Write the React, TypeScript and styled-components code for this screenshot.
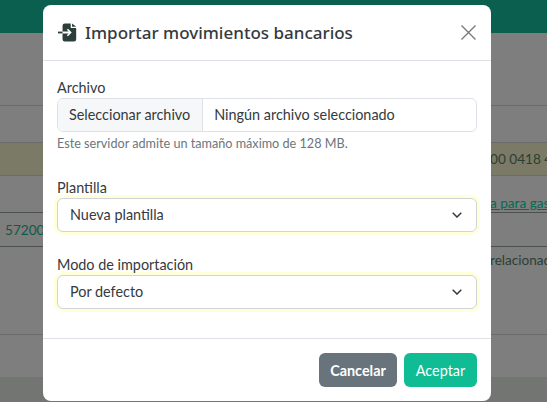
import React from "react";
import styled, { createGlobalStyle } from "styled-components";

const Global = createGlobalStyle`
  html, body { margin: 0; padding: 0; height: 100%; overflow: hidden; }
  body { font-family: "Lato", "Noto Sans", sans-serif; color: #212529; background: #808080; }
`;

const Page = styled.div`
  position: relative;
  width: 547px;
  height: 402px;
  overflow: hidden;
  background: #7e7e7e;
  display: flex;
  flex-direction: column;
`;

const TopBar = styled.div`
  height: 33px;
  flex: none;
  background: #0a5f4f;
`;

const Table = styled.div`
  flex: none;
  margin-top: 72px;
  display: flex;
  flex-direction: column;
`;

const Row = styled.div<{ $h: number; $tint?: boolean; $dark?: boolean; $align?: string }>`
  height: ${(p) => p.$h}px;
  box-sizing: border-box;
  border-top: 1px solid ${(p) => (p.$dark ? "#4b5150" : "#6b6b6b")};
  background: ${(p) => (p.$tint ? "#7a7a66" : "transparent")};
  display: flex;
  align-items: ${(p) => p.$align ?? "center"};
  font-size: 13.6px;
  line-height: 20px;
  color: #0e5a48;
  white-space: nowrap;
`;

const LeftCell = styled.span`
  padding-left: 5px;
`;

const RightCell = styled.span<{ $link?: boolean; $top?: number; $bottom?: number }>`
  margin-left: auto;
  width: 57px;
  flex: none;
  overflow: hidden;
  margin-top: ${(p) => p.$top ?? 0}px;
  margin-bottom: ${(p) => p.$bottom ?? 0}px;
  text-decoration: ${(p) => (p.$link ? "underline" : "none")};
  color: ${(p) => (p.$link ? "#066a50" : "#2a3f34")};
`;

const PageFoot = styled.div`
  flex: 1;
  background: #737573;
`;

const Dialog = styled.div`
  position: absolute;
  top: 5px;
  left: 43px;
  width: 448px;
  height: 396px;
  background: #fff;
  border-radius: 8px;
  display: flex;
  flex-direction: column;
`;

const Header = styled.div`
  height: 56px;
  flex: none;
  box-sizing: border-box;
  border-bottom: 1px solid #dee2e6;
  padding: 0 15px 0 15px;
  display: flex;
  align-items: center;
`;

const Title = styled.h5`
  margin: 0 0 0 7px;
  font-family: "Noto Sans", sans-serif;
  font-size: 17px;
  font-weight: 500;
  color: #343a40;
  flex: 1;
`;

const Body = styled.div`
  flex: 1;
  padding: 16px 14px 0;
  display: flex;
  flex-direction: column;
`;

const Label = styled.label`
  font-size: 14.4px;
  line-height: 19px;
  padding-top: 1px;
  color: #343a40;
  display: block;
  margin-bottom: 1px;
`;

const FileInput = styled.div`
  height: 33.5px;
  box-sizing: border-box;
  border: 1px solid #dee2e6;
  border-radius: 6px;
  display: flex;
  align-items: center;
  font-size: 14.4px;
  color: #343a40;
  overflow: hidden;
`;

const FileButton = styled.span`
  height: 100%;
  display: flex;
  align-items: center;
  padding: 0 12px 0 11px;
  background: #f6f7f9;
  border-right: 1px solid #dee2e6;
`;

const FileName = styled.span`
  padding-left: 11px;
`;

const Help = styled.div`
  margin-top: 3px;
  font-size: 12.65px;
  line-height: 18px;
  color: #6c757d;
`;

const Field = styled.div<{ $mt: number }>`
  margin-top: ${(p) => p.$mt}px;
`;

const Select = styled.div`
  height: 34px;
  box-sizing: border-box;
  border: 1px solid #ced4da;
  border-radius: 6px;
  box-shadow: 0 0 0 3px #ffffd9;
  padding: 0 14px 0 12px;
  display: flex;
  align-items: center;
  justify-content: space-between;
  font-size: 14.4px;
  color: #343a40;
`;

const Footer = styled.div`
  height: 63px;
  flex: none;
  box-sizing: border-box;
  border-top: 1px solid #dee2e6;
  padding: 14px 14px 0;
  display: flex;
  justify-content: flex-end;
  align-items: flex-start;
  gap: 7px;
`;

const Button = styled.button<{ $primary?: boolean }>`
  height: 34px;
  width: ${(p) => (p.$primary ? 73 : 78)}px;
  padding: 0;
  border: none;
  border-radius: 6px;
  background: ${(p) => (p.$primary ? "#10bc94" : "#68737b")};
  color: #fff;
  font: inherit;
  font-size: 14.4px;
  font-weight: ${(p) => (p.$primary ? 400 : 700)};
`;

const CloseButton = styled.button`
  border: none;
  background: none;
  padding: 0;
  width: 15px;
  height: 15px;
  display: flex;
`;

const Chevron = () => (
  <svg width="10" height="6" viewBox="0 0 10 6" aria-hidden="true">
    <path d="M.7.7 5 5l4.3-4.3" stroke="#343a40" strokeWidth="1.5" fill="none" />
  </svg>
);

export default function App() {
  return (
    <Page>
      <Global />
      <TopBar />
      <Table>
        <Row $h={37} />
        <Row $h={33} $tint>
          <RightCell>00 0418 4</RightCell>
        </Row>
        <Row $h={37} $align="flex-end">
          <RightCell $link $bottom={-1}>a para gas</RightCell>
        </Row>
        <Row $h={34} $dark>
          <LeftCell>57200</LeftCell>
        </Row>
        <Row $h={88} $dark $align="flex-start">
          <RightCell $top={3}>relacionada</RightCell>
        </Row>
        <Row $h={43} />
      </Table>
      <PageFoot />
      <Dialog>
        <Header>
          <svg width="20" height="19" viewBox="0 0 22 20" aria-hidden="true">
            <path d="M5 2.5A2.5 2.5 0 0 1 7.5 0H14v5h6v12.5a2.5 2.5 0 0 1-2.5 2.5h-10A2.5 2.5 0 0 1 5 17.5V11h6.6l-1.9 1.9 1.3 1.3L15.1 10 11 5.8 9.7 7.1 11.6 9H5z" fill="#2c3e3a" />
            <path d="M15.5 0 20 3.8h-4.5z" fill="#2c3e3a" />
            <path d="M0 9h5v2H0z" fill="#2c3e3a" />
          </svg>
          <Title>Importar movimientos bancarios</Title>
          <CloseButton aria-label="Cerrar">
            <svg width="15" height="15" viewBox="0 0 15 15" aria-hidden="true">
              <path d="M.5.5l14 14M14.5.5l-14 14" stroke="#7a7a7a" strokeWidth="1.4" fill="none" />
            </svg>
          </CloseButton>
        </Header>
        <Body>
          <Label>Archivo</Label>
          <FileInput>
            <FileButton>Seleccionar archivo</FileButton>
            <FileName>Ningún archivo seleccionado</FileName>
          </FileInput>
          <Help>Este servidor admite un tamaño máximo de 128 MB.</Help>
          <Field $mt={24}>
            <Label>Plantilla</Label>
            <Select>
              Nueva plantilla
              <Chevron />
            </Select>
          </Field>
          <Field $mt={22}>
            <Label>Modo de importación</Label>
            <Select>
              Por defecto
              <Chevron />
            </Select>
          </Field>
        </Body>
        <Footer>
          <Button>Cancelar</Button>
          <Button $primary>Aceptar</Button>
        </Footer>
      </Dialog>
    </Page>
  );
}
